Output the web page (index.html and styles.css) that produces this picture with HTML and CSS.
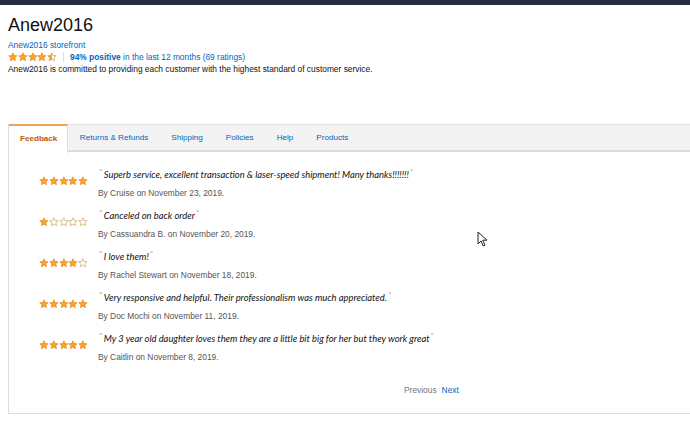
FILE: index.html
```html
<!DOCTYPE html>
<html lang="en">
<head>
    <meta charset="UTF-8">
    <meta name="viewport" content="width=device-width, initial-scale=1.0">
    <title>Anew2016 - Seller Profile</title>
    <link rel="stylesheet" href="styles.css">
</head>
<body>
    <div class="top-bar"></div>

    <svg class="defs" width="0" height="0">
        <defs>
            <linearGradient id="halfFill">
                <stop offset="50%" stop-color="#ffa41c"/>
                <stop offset="50%" stop-color="#fff"/>
            </linearGradient>
            <symbol id="star" viewBox="0 0 20 20">
                <path d="M10 1.6l2.5 5.5 6 .6-4.5 4.1 1.3 5.9L10 14.7l-5.3 3 1.3-5.9L1.5 7.7l6-.6z"/>
            </symbol>
        </defs>
    </svg>

    <div class="seller">
        <h1>Anew2016</h1>
        <a class="storefront" href="#">Anew2016 storefront</a>
        <div class="rating-line">
            <span class="stars" data-rating="4.5"></span>
            <span class="sep"></span>
            <a href="#"><b>94% positive</b> in the last 12 months (69 ratings)</a>
        </div>
        <p class="about">Anew2016 is committed to providing each customer with the highest standard of customer service.</p>
    </div>

    <div class="panel">
        <ul class="tabs">
            <li class="active">Feedback</li>
            <li>Returns &amp; Refunds</li>
            <li>Shipping</li>
            <li>Policies</li>
            <li>Help</li>
            <li>Products</li>
        </ul>

        <div class="feedback-list">
            <div class="review">
                <span class="stars" data-rating="5"></span>
                <div class="review-body">
                    <p class="quote"><span class="q">&ldquo;</span>Superb service, excellent transaction &amp; laser-speed shipment! Many thanks!!!!!!!<span class="q">&rdquo;</span></p>
                    <p class="by">By Cruise on November 23, 2019.</p>
                </div>
            </div>
            <div class="review">
                <span class="stars" data-rating="1"></span>
                <div class="review-body">
                    <p class="quote"><span class="q">&ldquo;</span>Canceled on back order<span class="q">&rdquo;</span></p>
                    <p class="by">By Cassuandra B. on November 20, 2019.</p>
                </div>
            </div>
            <div class="review">
                <span class="stars" data-rating="4"></span>
                <div class="review-body">
                    <p class="quote"><span class="q">&ldquo;</span>I love them!<span class="q">&rdquo;</span></p>
                    <p class="by">By Rachel Stewart on November 18, 2019.</p>
                </div>
            </div>
            <div class="review">
                <span class="stars" data-rating="5"></span>
                <div class="review-body">
                    <p class="quote"><span class="q">&ldquo;</span>Very responsive and helpful. Their professionalism was much appreciated.<span class="q">&rdquo;</span></p>
                    <p class="by">By Doc Mochi on November 11, 2019.</p>
                </div>
            </div>
            <div class="review">
                <span class="stars" data-rating="5"></span>
                <div class="review-body">
                    <p class="quote"><span class="q">&ldquo;</span>My 3 year old daughter loves them they are a little bit big for her but they work great<span class="q">&rdquo;</span></p>
                    <p class="by">By Caitlin on November 8, 2019.</p>
                </div>
            </div>

            <div class="pager">
                <span class="prev">Previous</span>
                <a href="#">Next</a>
            </div>
        </div>
    </div>

    <svg class="cursor" width="11" height="16" viewBox="0 0 11 16">
        <path d="M1 1v12l3-3 2.2 5 1.8-.8-2.2-5H10z" fill="#fff" stroke="#222" stroke-width="1"/>
    </svg>

    <script>
        // fill every .stars element from its data-rating
        document.querySelectorAll('.stars').forEach(el => {
            const rating = parseFloat(el.dataset.rating);
            let html = '';
            for (let i = 1; i <= 5; i++) {
                let cls = 'empty';
                if (rating >= i) cls = 'full';
                else if (rating > i - 1) cls = 'half';
                html += `<svg class="star ${cls}" viewBox="0 0 20 20"><use href="#star"/></svg>`;
            }
            el.innerHTML = html;
        });
    </script>
</body>
</html>
```

FILE: styles.css
```css
* {
    margin: 0;
    padding: 0;
    box-sizing: border-box;
}
body {
    font-family: "Liberation Sans", Arial, sans-serif;
    font-size: 8.4px;
    color: #111;
    background: #fff;
    overflow: hidden;
    position: relative;
}
a {
    color: #0066c0;
    text-decoration: none;
}
.defs {
    position: absolute;
}
.top-bar {
    height: 5px;
    background-color: #232f3e;
}
.seller {
    padding: 0 8px;
}
h1 {
    font-size: 18px;
    font-weight: normal;
    line-height: 22px;
    margin-top: 9px;
    margin-bottom: 3px;
    color: #111;
}
.storefront {
    display: block;
    line-height: 12px;
}
.rating-line {
    display: flex;
    align-items: center;
    height: 12px;
}
.sep {
    width: 1px;
    height: 10px;
    background-color: #ddd;
    margin: 0 6px 0 6px;
}
.about {
    line-height: 12px;
}
.stars {
    display: inline-flex;
}
.star {
    width: 9.8px;
    height: 9.8px;
    stroke-width: 1.2px;
}
.star.full {
    fill: #ffa41c;
    stroke: #de7921;
}
.star.half {
    fill: url(#halfFill);
    stroke: #de7921;
}
.star.empty {
    fill: #fff;
    stroke: #c9933f;
}
.panel {
    margin: 49px 0 0 8px;
    width: 700px;
    border: 1px solid #ddd;
    border-top: none;
    height: 290px;
}
.tabs {
    list-style: none;
    display: flex;
    height: 28px;
    background-color: #f3f3f3;
    border-top: 1px solid #e3e3e3;
    border-bottom: 2px solid #ddd;
}
.tabs li {
    padding: 0 11.5px;
    line-height: 26px;
    color: #0066c0;
    font-size: 8.1px;
}
.tabs li.active {
    color: #c45500;
    font-weight: bold;
    background-color: #fff;
    border-top: 2px solid #f0a353;
    border-right: 1px solid #ddd;
    margin-top: -1px;
    height: 29px;
    line-height: 26px;
    padding: 0 10px 0 11px;
}
.feedback-list {
    padding: 16px 0 0 30px;
}
.review {
    display: flex;
    align-items: flex-start;
    margin-bottom: 9px;
}
.review .stars {
    width: 59px;
    margin-top: 8px;
}
.quote {
    font-family: Lato, "Liberation Sans", sans-serif;
    font-style: italic;
    font-size: 9.4px;
    line-height: 14px;
    color: #111;
}
.q {
    position: relative;
    top: -3px;
    font-size: 8px;
    color: #999;
    margin: 0 2px 0 1px;
}
.by {
    margin-top: 4px;
    line-height: 14px;
    color: #555;
}
.pager {
    display: flex;
    gap: 5px;
    padding-left: 365px;
    margin-top: 19px;
    line-height: 14px;
}
.prev {
    color: #767676;
}
.cursor {
    position: absolute;
    left: 477px;
    top: 231px;
}
```
